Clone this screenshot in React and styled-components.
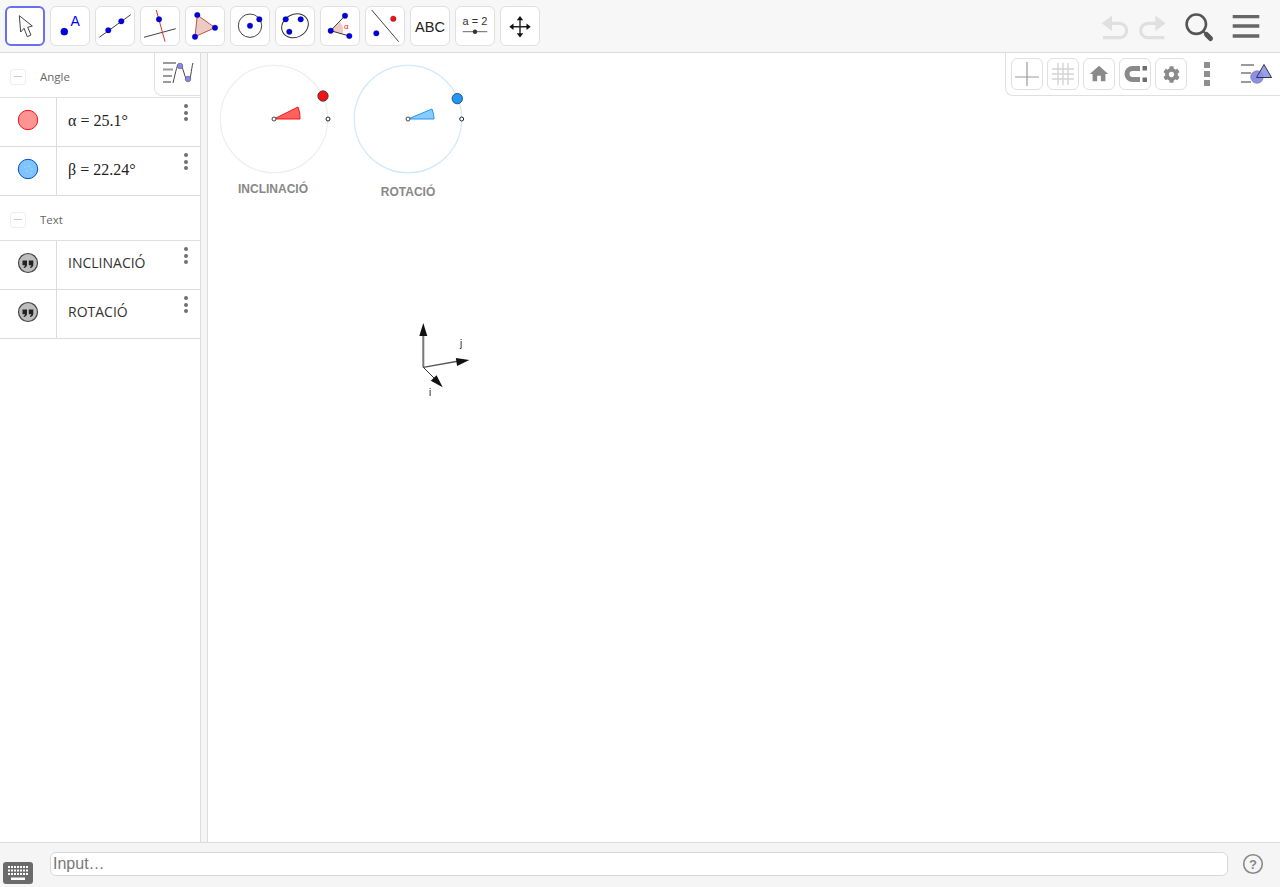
import React from 'react'
import styled, { createGlobalStyle } from 'styled-components'
import { MdHome } from 'react-icons/md'
import { FaCog } from 'react-icons/fa'

const GlobalStyle = createGlobalStyle`
  html, body { margin: 0; padding: 0; background: #fff; }
  * { box-sizing: border-box; }
`

const Page = styled.div`
  width: 1280px;
  height: 887px;
  display: flex;
  flex-direction: column;
  overflow: hidden;
  font-family: "Open Sans", "Liberation Sans", sans-serif;
`

const TopBar = styled.div`
  height: 53px;
  flex: none;
  display: flex;
  align-items: flex-start;
  gap: 5px;
  padding: 6px 0 0 5px;
  background: #f7f7f7;
  border-bottom: 1px solid #dcdcdc;
`

const ToolButton = styled.div`
  width: 40px;
  height: 40px;
  flex: none;
  background: #fff;
  border-radius: 6px;
  border: ${p => (p.$active ? '2px solid #6a6ff0' : '1px solid #e0e0e0')};
  position: relative;
  svg { position: absolute; left: ${p => (p.$active ? '-2px' : '-1px')}; top: ${p => (p.$active ? '-2px' : '-1px')}; }
`

const RightTools = styled.div`
  margin-left: auto;
  margin-right: 18px;
  display: flex;
  align-items: flex-start;
`

const TopIcon = styled.svg`
  flex: none;
  margin-left: ${p => p.$gap || 0}px;
`

const Main = styled.div`
  flex: 1;
  display: flex;
  min-height: 0;
`

const AlgebraPanel = styled.div`
  width: 201px;
  flex: none;
  position: relative;
  border-right: 1px solid #dcdcdc;
  background: #fff;
`

const GroupHeader = styled.div`
  height: 45px;
  display: flex;
  align-items: center;
  padding: 3px 0 0 10px;
  gap: 14px;
  border-bottom: 1px solid #e0e0e0;
  font-size: 11.5px;
  color: #666;
`

const Collapse = styled.span`
  width: 16px;
  height: 16px;
  border: 1px solid #eee;
  border-radius: 3px;
  display: flex;
  align-items: center;
  justify-content: center;
  &::before {
    content: '';
    width: 8px;
    height: 1.5px;
    background: #ccc;
  }
`

const Row = styled.div`
  height: 49px;
  display: grid;
  grid-template-columns: 57px 1fr 30px;
  border-bottom: 1px solid #dcdcdc;
`

const MarbleCell = styled.div`
  border-right: 1px solid #dcdcdc;
  display: flex;
  align-items: center;
  justify-content: center;
  padding: 0 1px 4px 0;
`

const Value = styled.div`
  display: flex;
  align-items: center;
  padding: 0 0 ${p => (p.$math ? '3px' : '5px')} 11px;
  font-size: ${p => (p.$math ? '16px' : '14px')};
  color: ${p => (p.$math ? '#222' : '#333')};
  font-family: ${p => (p.$math ? '"Liberation Serif", serif' : '"Open Sans", sans-serif')};
  white-space: nowrap;
`

const More = styled.div`
  display: flex;
  flex-direction: column;
  align-items: center;
  gap: 2.6px;
  padding: 6px 0 0 1px;
  span {
    width: 4px;
    height: 4px;
    border-radius: 50%;
    background: #707070;
  }
`

const StyleToggle = styled.div`
  position: absolute;
  top: 0;
  right: 0;
  width: 46px;
  height: 43px;
  background: #fff;
  border-left: 1px solid #e0e0e0;
  border-bottom: 1px solid #e0e0e0;
  border-bottom-left-radius: 8px;
`

const Divider = styled.div`
  width: 7px;
  flex: none;
  background: #f5f5f5;
  border-right: 1px solid #dcdcdc;
`

const Canvas = styled.div`
  flex: 1;
  position: relative;
  background: #fff;
`

const Drawing = styled.svg`
  position: absolute;
  left: ${p => p.$x}px;
  top: ${p => p.$y}px;
  overflow: visible;
`

const DialLabel = styled.div`
  position: absolute;
  left: ${p => p.$x}px;
  top: ${p => p.$y}px;
  transform: translateX(-50%);
  font: bold 12px "Liberation Sans", sans-serif;
  color: #888;
  white-space: nowrap;
`

const AxisLabel = styled.div`
  position: absolute;
  left: ${p => p.$x}px;
  top: ${p => p.$y}px;
  will-change: transform;
  font: 10px "Liberation Sans", sans-serif;
  color: #222;
`

const GraphicsBar = styled.div`
  position: absolute;
  top: 0;
  right: 0;
  width: 275px;
  height: 43px;
  display: flex;
  align-items: flex-start;
  gap: 4px;
  padding: 5px 0 0 5px;
  background: #fff;
  border-left: 1px solid #e0e0e0;
  border-bottom: 1px solid #e0e0e0;
  border-bottom-left-radius: 8px;
`

const SmallButton = styled.div`
  width: 32px;
  height: 32px;
  flex: none;
  border: 1px solid #e0e0e0;
  border-radius: 6px;
  display: flex;
  align-items: center;
  justify-content: center;
  color: #8a8a8a;
`

const SquareDots = styled.div`
  width: 32px;
  display: flex;
  flex-direction: column;
  align-items: center;
  gap: 3px;
  padding-top: 4px;
  span {
    width: 6px;
    height: 6px;
    background: #8f8f8f;
  }
`

const ViewToggle = styled.div`
  margin-left: auto;
  margin-right: 6px;
`

const BottomBar = styled.div`
  height: 45px;
  flex: none;
  display: flex;
  align-items: flex-start;
  padding: 9px 0 0 3px;
  background: #f5f5f5;
  border-top: 1px solid #dcdcdc;
`

const Keyboard = styled.svg`
  margin-top: 10px;
  flex: none;
`

const InputField = styled.input`
  width: 1178px;
  height: 24px;
  margin-left: 17px;
  padding: 0 2px;
  border: 1px solid #d8d8d8;
  border-radius: 6px;
  background: #fff;
  outline: none;
  font: 16px "Liberation Sans", sans-serif;
  &::placeholder { color: #777; opacity: 1; }
`

const Help = styled.svg`
  margin: 1px 0 0 14px;
  flex: none;
`

const Dot = ({ x, y, r = 2.8, fill = '#0000e6' }) => (
  <circle cx={x} cy={y} r={r} fill={fill} stroke="#113" strokeWidth="0.25" />
)

const tools = [
  <>
    <path d="M14.3 9.7 15.7 26 19 22.3 22.3 30.7 26 29 22.7 21.3 27.3 20Z" fill="#fff" stroke="#444" strokeWidth="1" />
  </>,
  <>
    <Dot x={14.3} y={25.7} r={3.6} />
    <text x={20.5} y={19.8} fontSize="14" fill="#0000ff" fontFamily="Liberation Sans">A</text>
  </>,
  <>
    <line x1="4.3" y1="31.3" x2="35.7" y2="8.7" stroke="#444" />
    <Dot x={13.3} y={24.3} />
    <Dot x={26.3} y={15.3} />
  </>,
  <>
    <line x1="4" y1="31.3" x2="35.7" y2="22.7" stroke="#444" />
    <line x1="16.3" y1="4" x2="25" y2="35.7" stroke="#e03030" />
    <Dot x={19} y={13.3} />
  </>,
  <>
    <path d="M12.3 9 30 21.7 10 30.7Z" fill="#eccbc4" stroke="#c05050" />
    <Dot x={12.3} y={9} />
    <Dot x={30} y={21.7} />
    <Dot x={10} y={30.7} />
  </>,
  <>
    <circle cx="20" cy="19.7" r="11.7" fill="none" stroke="#444" />
    <Dot x={20} y={19.7} />
    <Dot x={29.3} y={13.3} />
  </>,
  <>
    <ellipse cx="20" cy="19.8" rx="13.8" ry="11.4" transform="rotate(-28 20 19.8)" fill="none" stroke="#333" />
    <Dot x={10.7} y={13.3} />
    <Dot x={25.7} y={13.3} />
    <Dot x={14.3} y={25.7} />
  </>,
  <>
    <path d="M10.7 24.7 20 16 Q24 21 23 27.5Z" fill="#f0c8c4" />
    <path d="M25 9.7 10.7 24.7 29.3 30" fill="none" stroke="#333" />
    <text x={24} y={23} fontSize="8" fill="#f02020" fontFamily="Liberation Sans">α</text>
    <Dot x={10.7} y={24.7} />
    <Dot x={25} y={9.7} />
    <Dot x={29.3} y={30} />
  </>,
  <>
    <line x1="6.7" y1="4" x2="33.7" y2="35.7" stroke="#444" />
    <Dot x={28.3} y={12.7} fill="#ee1111" />
    <Dot x={11.3} y={27.3} />
  </>,
  <>
    <text x="20" y="25.5" fontSize="14.5" textAnchor="middle" fill="#222" fontFamily="Liberation Sans">ABC</text>
  </>,
  <>
    <text x="20" y="19" fontSize="11" textAnchor="middle" fill="#333" fontFamily="Liberation Sans">a = 2</text>
    <line x1="7.7" y1="25.7" x2="32.3" y2="25.7" stroke="#666" />
    <circle cx="20" cy="25.7" r="2.2" fill="#333" />
  </>,
  <>
    <path d="M20 12V29M11.5 20.7H28.5" stroke="#222" strokeWidth="1.4" />
    <path d="M20 10 16.8 14.2H23.2ZM20 31.4 16.8 27.2H23.2ZM9.3 20.7 13.5 17.5V23.9ZM30.7 20.7 26.5 17.5V23.9Z" fill="#111" />
  </>,
]

const QuoteMarble = () => (
  <svg width="22" height="22" viewBox="0 0 22 22">
    <circle cx="11" cy="11" r="9.5" fill="#bdbdbd" stroke="#444" strokeWidth="1.2" />
    <path d="M5.5 8.5h4.5v4c0 2-1 3-3 3.5l-.5-1c1-.3 1.5-.9 1.5-1.7H5.5ZM11.8 8.5h4.5v4c0 2-1 3-3 3.5l-.5-1c1-.3 1.5-.9 1.5-1.7h-2.5Z" fill="#222" />
  </svg>
)

const Marble = ({ fill, stroke, dotted }) => (
  <svg width="22" height="22" viewBox="0 0 22 22">
    <circle cx="11" cy="11" r="9.7" fill={fill} stroke={stroke} strokeWidth="1" />
    {dotted && (
      <g fill="#d8eeff">
        <circle cx="8" cy="9" r=".6" />
        <circle cx="12" cy="8" r=".6" />
        <circle cx="15" cy="11" r=".6" />
        <circle cx="10" cy="13" r=".6" />
        <circle cx="14" cy="15" r=".6" />
      </g>
    )}
  </svg>
)

const Dots = () => (
  <More>
    <span />
    <span />
    <span />
  </More>
)

// wedge and handle points are read from the picture, in canvas coordinates
const Dial = ({ x, y, ring, tip, wedge, wedgeLine, handle, handleStroke, small }) => (
  <Drawing $x={x} $y={y} width="1" height="1">
    <circle cx="0" cy="0" r="53.7" fill="none" stroke={ring} strokeWidth="1.2" />
    <path d={`M0 0 L${tip[0]} ${tip[1]} A26 26 0 0 1 26 0Z`} fill={wedge} stroke={wedgeLine} strokeWidth="1" />
    <circle cx={handle[0]} cy={handle[1]} r="5.2" fill={wedgeLine} stroke={handleStroke} strokeWidth="0.8" />
    <circle cx="0" cy="0" r="2" fill="#fff" stroke="#444" strokeWidth="1" />
    <circle cx={small} cy="0" r="2" fill="#fff" stroke="#222" strokeWidth="1" />
  </Drawing>
)

const Arrow = ({ to, from }) => {
  const dx = to[0] - from[0]
  const dy = to[1] - from[1]
  const len = Math.hypot(dx, dy)
  const ux = dx / len
  const uy = dy / len
  const bx = to[0] - ux * 13
  const by = to[1] - uy * 13
  return <path d={`M${to[0]} ${to[1]} L${bx - uy * 4} ${by + ux * 4} L${bx + uy * 4} ${by - ux * 4}Z`} fill="#111" />
}

export default function App() {
  return (
    <Page>
      <GlobalStyle />
      <TopBar>
        {tools.map((icon, i) => (
          <ToolButton key={i} $active={i === 0}>
            <svg width="40" height="40" viewBox="0 0 40 40">{icon}</svg>
          </ToolButton>
        ))}
        <RightTools>
          <TopIcon width="32" height="40" viewBox="1100 6 32 40">
            <path d="M1110 23.3H1119.5a7.2 7.2 0 0 1 0 14.4H1103" fill="none" stroke="#e0e0e0" strokeWidth="3.2" />
            <path d="M1101.7 23.3 1112 15.5V31Z" fill="#e0e0e0" />
          </TopIcon>
          <TopIcon $gap={3} width="32" height="40" viewBox="1135 6 32 40">
            <path d="M1157.4 23.3H1147.9a7.2 7.2 0 0 0 0 14.4H1164.4" fill="none" stroke="#e0e0e0" strokeWidth="3.2" />
            <path d="M1165.7 23.3 1155.4 15.5V31Z" fill="#e0e0e0" />
          </TopIcon>
          <TopIcon $gap={15} width="34" height="40" viewBox="1182 6 34 40">
            <circle cx="1196.3" cy="24.2" r="9.7" fill="none" stroke="#555" strokeWidth="2.6" />
            <path d="M1203.3 31.2 1206 34" stroke="#555" strokeWidth="2" />
            <path d="M1206.5 34.5 1210.5 38.5" stroke="#555" strokeWidth="5" strokeLinecap="round" />
          </TopIcon>
          <TopIcon $gap={14} width="32" height="40" viewBox="1230 6 32 40">
            <path d="M1232.7 16.7H1259.3M1232.7 26H1259.3M1232.7 36H1259.3" stroke="#666" strokeWidth="3.3" />
          </TopIcon>
        </RightTools>
      </TopBar>
      <Main>
        <AlgebraPanel>
          <GroupHeader><Collapse />Angle</GroupHeader>
          <Row>
            <MarbleCell><Marble fill="#ff9494" stroke="#ee1111" /></MarbleCell>
            <Value $math>α = 25.1°</Value>
            <Dots />
          </Row>
          <Row>
            <MarbleCell><Marble fill="#80c4ff" stroke="#0050d0" dotted /></MarbleCell>
            <Value $math>β = 22.24°</Value>
            <Dots />
          </Row>
          <GroupHeader><Collapse />Text</GroupHeader>
          <Row>
            <MarbleCell><QuoteMarble /></MarbleCell>
            <Value>INCLINACIÓ</Value>
            <Dots />
          </Row>
          <Row>
            <MarbleCell><QuoteMarble /></MarbleCell>
            <Value>ROTACIÓ</Value>
            <Dots />
          </Row>
          <StyleToggle>
            <svg width="46" height="43" viewBox="0 0 46 43">
              <path d="M8 10H21M8 16.5H18M8 23H17M8 29H16" stroke="#9a9a9a" strokeWidth="2" />
              <path d="M18 30C21 18 22 10 25 11S30 28 33 28 36 16 38 10" fill="none" stroke="#444" strokeWidth="1" />
              <circle cx="25" cy="13" r="2.8" fill="#8888e8" stroke="#555" strokeWidth=".6" />
              <circle cx="33" cy="26" r="2.8" fill="#8888e8" stroke="#555" strokeWidth=".6" />
            </svg>
          </StyleToggle>
        </AlgebraPanel>
        <Divider />
        <Canvas>
          <Dial
            x={65.5}
            y={66}
            ring="#eeeeee"
            tip={[24, -12]}
            wedge="#ff6060"
            wedgeLine="#f01515"
            handle={[49, -23]}
            handleStroke="#333"
            small={54}
          />
          <DialLabel $x={65} $y={129}>INCLINACIÓ</DialLabel>
          <Dial
            x={200}
            y={65.7}
            ring="#cfe8fb"
            tip={[24, -10]}
            wedge="#8accff"
            wedgeLine="#2196f3"
            handle={[49.3, -20.4]}
            handleStroke="#1a3565"
            small={53.7}
          />
          <DialLabel $x={200} $y={131.5}>ROTACIÓ</DialLabel>
          <Drawing $x={200.5} $y={260} width="80" height="90">
            <path d="M14.3 54.3V20" stroke="#777" strokeWidth="2" />
            <path d="M14.3 54.3 50 48" stroke="#555" strokeWidth="1.3" />
            <path d="M14.3 54.3 28 68" stroke="#333" strokeWidth="1" />
            <Arrow from={[14.3, 54.3]} to={[14.3, 10]} />
            <Arrow from={[14.3, 54.3]} to={[60.3, 47]} />
            <Arrow from={[14.3, 54.3]} to={[33.7, 74.3]} />
          </Drawing>
          <AxisLabel $x={252} $y={285}>j</AxisLabel>
          <AxisLabel $x={221} $y={334}>i</AxisLabel>
          <GraphicsBar>
            <SmallButton>
              <svg width="30" height="30" viewBox="0 0 30 30"><path d="M15 3V27M3 18H27" stroke="#999" strokeWidth="1.2" /></svg>
            </SmallButton>
            <SmallButton>
              <svg width="30" height="30" viewBox="0 0 30 30"><path d="M10 4V26M15 4V26M20 4V26M4 10H26M4 15H26M4 20H26" stroke="#d4d4d4" strokeWidth="1.4" /></svg>
            </SmallButton>
            <SmallButton><MdHome size={22} /></SmallButton>
            <SmallButton>
              <svg width="30" height="30" viewBox="0 0 30 30">
                <path d="M20 9.5H12.5a5.5 5.5 0 0 0 0 11H20" fill="none" stroke="#8a8a8a" strokeWidth="5" />
                <path d="M22.5 7h4.5v4.5h-4.5zM22.5 18.5h4.5V23h-4.5z" fill="#6f6f6f" />
              </svg>
            </SmallButton>
            <SmallButton><FaCog size={17} /></SmallButton>
            <SquareDots>
              <span />
              <span />
              <span />
            </SquareDots>
            <ViewToggle>
              <svg width="34" height="32" viewBox="0 0 34 32">
                <path d="M1 7H14M1 15H11M1 24H11" stroke="#9a9a9a" strokeWidth="2" />
                <circle cx="17" cy="19" r="6.3" fill="#8a8fe8" stroke="#777" strokeWidth=".6" />
                <path d="M24 6.5 31.5 19.5H16.5Z" fill="#8a8fe8" fillOpacity=".85" stroke="#334" strokeWidth="1" />
              </svg>
            </ViewToggle>
          </GraphicsBar>
        </Canvas>
      </Main>
      <BottomBar>
        <Keyboard width="30" height="22" viewBox="0 0 30 22">
          <rect width="30" height="22" rx="3" fill="#6b6b6b" />
          <path d="M5 5h20M5 8.5h20M5 12h20" stroke="#fff" strokeWidth="2" strokeDasharray="2 1" />
          <rect x="8" y="15.5" width="14" height="2.5" fill="#fff" />
        </Keyboard>
        <InputField placeholder="Input…" />
        <Help width="22" height="22" viewBox="0 0 22 22">
          <circle cx="11" cy="11" r="9.3" fill="none" stroke="#888" strokeWidth="1.6" />
          <text x="11" y="15.5" textAnchor="middle" fontSize="13" fontWeight="bold" fill="#888" fontFamily="Liberation Sans">?</text>
        </Help>
      </BottomBar>
    </Page>
  )
}
